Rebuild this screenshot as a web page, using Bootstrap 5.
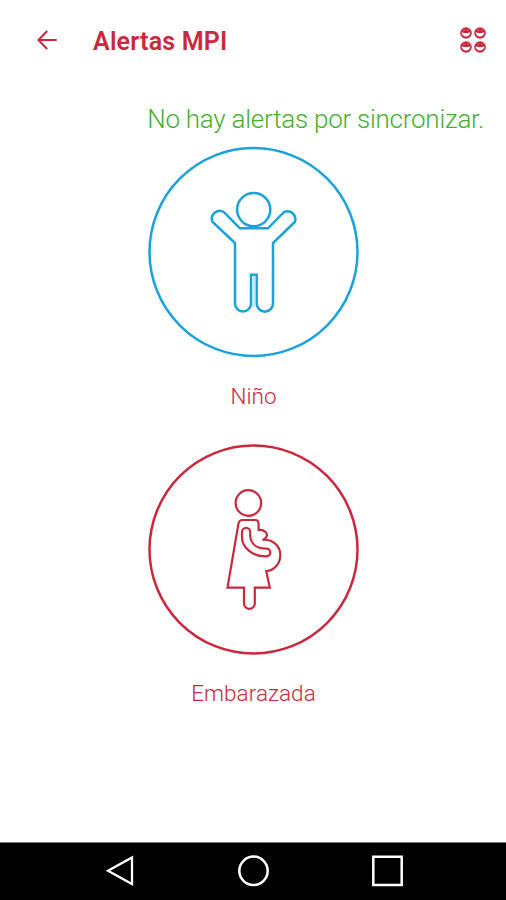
<!DOCTYPE html>
<html lang="es">
<head>
<meta charset="utf-8">
<meta name="viewport" content="width=device-width, initial-scale=1">
<title>Alertas MPI</title>
<link href="https://cdn.jsdelivr.net/npm/bootstrap@5.3.0/dist/css/bootstrap.min.css" rel="stylesheet">
<style>
body{font-family:Roboto,"Liberation Sans",sans-serif;--red:#c9283d;--green:#43b02f}
svg{display:block;flex-shrink:0}
.topbar{height:80px;padding:0 18px 0 35px;color:var(--red)}
.title{font-size:25px;font-weight:600;line-height:30px;margin:3px 0 0 34px;letter-spacing:.2px}
.sync{font-size:26px;font-weight:300;line-height:30px;height:30px;margin-top:24px;padding-right:22px;letter-spacing:-.25px;color:var(--green)}
.choice{color:var(--red);background:none;border:0;padding:0 0 0 1px}
.choice span{font-size:22.5px;line-height:28px;font-weight:350;height:28px;margin-top:24px;letter-spacing:.05px}
.first{margin-top:12px}
.second{margin-top:33px}
.sysbar{height:58px;background:#000;border-top:1px solid #777;padding:0 101px 0 105px}
</style>
</head>
<body class="bg-white">
<div class="d-flex flex-column vh-100 overflow-hidden">
  <header class="topbar d-flex align-items-center">
    <button class="btn p-0 border-0" aria-label="Volver"><svg width="24" height="24" viewBox="0 0 24 24" fill="none" stroke="#c9283d" stroke-width="2"><path d="M21.7 12H3.4M12.2 3 3.4 12l8.8 9"/></svg></button>
    <h1 class="title me-auto">Alertas MPI</h1>
    <button class="btn p-0 border-0" aria-label="Menú"><svg width="30" height="30" viewBox="458 25 30 30">
      <defs><g id="dot"><circle r="5.8" fill="#c9283d"/><path d="M-4.3-.8L-2-.1H2L4.3-.8A4.3 4.4 0 0 1-4.3-.8" fill="#fff"/><path d="M-3-3H-1M1-3H3" stroke="#e08a96" stroke-width=".7"/></g></defs>
      <use href="#dot" x="466" y="33"/><use href="#dot" x="480" y="33"/><use href="#dot" x="466" y="47"/><use href="#dot" x="480" y="47"/>
    </svg></button>
  </header>
  <main class="flex-grow-1 d-flex flex-column align-items-center">
    <div class="sync align-self-end text-nowrap">No hay alertas por sincronizar.</div>
    <button class="choice first d-flex flex-column align-items-center">
      <svg width="212" height="212" viewBox="148 146 212 212" fill="none" stroke="#1ba2dc" stroke-width="2.5">
        <circle cx="253.5" cy="252" r="104"/>
        <circle cx="253.7" cy="209.6" r="16.6"/>
        <path d="M240 228.3 224.2 212.4A7.8 7.8 0 0 0 212.6 222L235 243V303.5A8 8 0 0 0 251 303.5V274.7H256.7V303.5A8.1 8.1 0 0 0 273 303.5V243L294.8 222A7.8 7.8 0 0 0 283.6 212.4L268 228.3Z"/>
        <path d="M253.8 276V307" stroke="#bfe6f8" stroke-width="3"/>
      </svg>
      <span>Niño</span>
    </button>
    <button class="choice second d-flex flex-column align-items-center">
      <svg width="212" height="212" viewBox="148 443 212 212" fill="none" stroke="#c9283d" stroke-width="2.5">
        <circle cx="253.5" cy="549.5" r="104"/>
        <g stroke-width="2.2"><circle cx="248.4" cy="503" r="12.8"/>
        <path d="M242.5 520H255Q258.6 520 258.6 524V530C264 529 268.5 533.5 266.3 537Q265 539 262.5 540C271 538.5 280.3 545 280.3 555C280.3 564 274 570.5 266.2 571L269.8 587.6H254.8V603.5A5.4 5.4 0 0 1 244 603.5V587.6H227.5L238.4 524Q239 520 242.5 520Z"/>
        <path d="M242 532A4.1 4.1 0 0 1 250.2 532V536C250.8 544 257 548.7 266.5 548.7A3.8 3.8 0 0 1 266.5 556.3C252 557 242 547 242 537Z"/></g>
      </svg>
      <span>Embarazada</span>
    </button>
  </main>
  <footer class="sysbar d-flex align-items-center justify-content-between">
    <svg width="30" height="34" viewBox="105 855 30 34" fill="none" stroke="#fff" stroke-width="2.3"><path d="M132 857.5V884L108 870.8Z"/></svg>
    <svg width="34" height="34" viewBox="236 855 34 34" fill="none" stroke="#fff" stroke-width="2.5"><circle cx="253.5" cy="870.8" r="14.2"/></svg>
    <svg width="34" height="34" viewBox="371 855 34 34" fill="none" stroke="#fff" stroke-width="2.5"><path d="M373.3 856.7H401.7V885H373.3Z"/></svg>
  </footer>
</div>
<script src="https://cdn.jsdelivr.net/npm/bootstrap@5.3.0/dist/js/bootstrap.bundle.min.js"></script>
</body>
</html>
